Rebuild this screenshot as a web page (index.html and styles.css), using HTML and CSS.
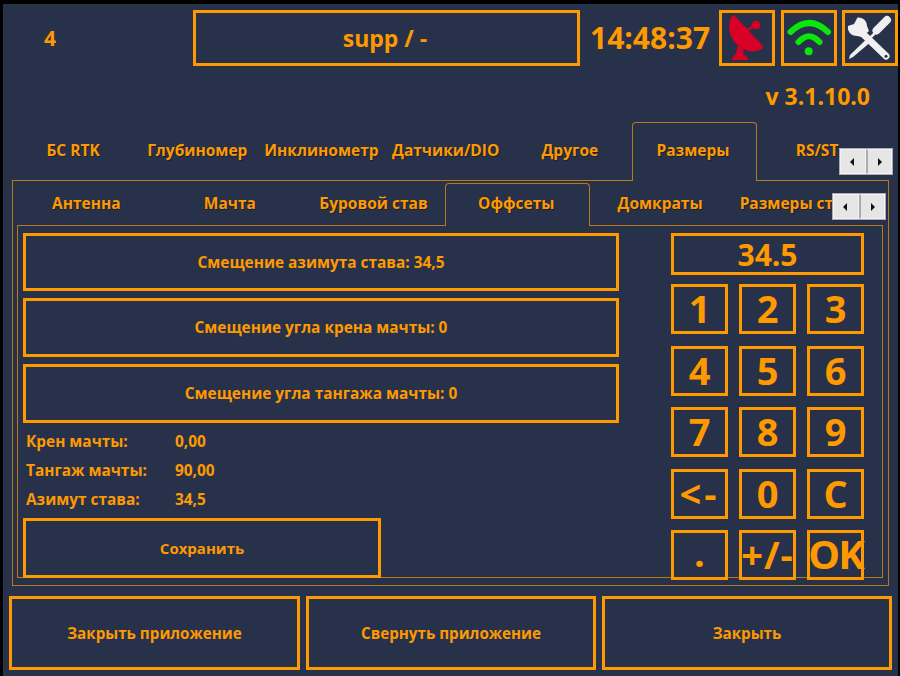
FILE: index.html
```html
<!DOCTYPE html>
<html lang="ru">
<head>
	<meta charset="UTF-8">
	<title>Размеры</title>
	<link rel="stylesheet" href="styles.css">
</head>
<body>
	<div class="app">
		<header class="top">
			<div class="top-num">4</div>
			<div class="box top-title">supp / -</div>
			<div class="top-time">14:48:37</div>
			<div class="box top-icon">
				<svg width="50" height="50" viewBox="0 0 50 50">
					<path fill="#d90026" d="M11 2 C7 6 6 14 8 20 C10 28 17 35 27 38 C32 39 37 38 41 35 C41 33 40 32 39 31 L12 2 Z"/>
					<path fill="none" stroke="#d90026" stroke-width="2.500" d="M22 19 L34 12"/>
					<circle fill="#d90026" cx="34" cy="12" r="4.300"/>
					<path fill="#d90026" d="M16 32 L14 41 C12 43 10 44 10 47 L26 47 C26 44 23 42 21 41 L22 36 Z"/>
				</svg>
			</div>
			<div class="box top-icon">
				<svg width="50" height="50" viewBox="0 0 50 50">
					<g fill="none" stroke="#0be60b" stroke-width="6" stroke-linecap="round">
						<path d="M6.500 19 Q25 1 44 19"/>
						<path d="M14.500 29 Q25 17.500 35.500 29"/>
					</g>
					<circle fill="#0be60b" cx="24.700" cy="38.300" r="4"/>
				</svg>
			</div>
			<div class="box top-icon">
				<svg width="50" height="50" viewBox="0 0 50 50">
					<path fill="#f0f0f0" d="M12.500 4.500 L9 11 L3 13 C2 18 6 23 12 23 L17 24 L24 18 L22 13 C22 8 18 4 12.500 4.500 Z"/>
					<path fill="none" stroke="#f0f0f0" stroke-width="7" stroke-linecap="round" d="M16 19 L41 43"/>
					<circle fill="#27324a" cx="41" cy="43.300" r="1.500"/>
					<path fill="none" stroke="#f0f0f0" stroke-width="8" stroke-linecap="round" d="M31.500 17.500 L42 7"/>
					<path fill="none" stroke="#f0f0f0" stroke-width="2.500" d="M30 20 L24 26"/>
					<path fill="#f0f0f0" d="M21 26.500 L24.500 30 L8 44 L4 46 L5 42 Z"/>
				</svg>
			</div>
		</header>
		<div class="version">v 3.1.10.0</div>

		<nav class="tabs">
			<div class="tab">БС RTK</div>
			<div class="tab">Глубиномер</div>
			<div class="tab">Инклинометр</div>
			<div class="tab">Датчики/DIO</div>
			<div class="tab">Другое</div>
			<div class="tab active">Размеры</div>
			<div class="tab">RS/ST</div>
		</nav>
		<div class="scroll scroll-outer"><span class="arr-l"></span><span class="arr-r"></span></div>

		<section class="pane">
			<nav class="tabs tabs-sub">
				<div class="tab">Антенна</div>
				<div class="tab">Мачта</div>
				<div class="tab">Буровой став</div>
				<div class="tab active">Оффсеты</div>
				<div class="tab">Домкраты</div>
				<div class="tab">Размеры станка</div>
			</nav>
			<div class="scroll scroll-inner"><span class="arr-l"></span><span class="arr-r"></span></div>

			<div class="subpane">
				<div class="left">
					<div class="box btn btn-first">Смещение азимута става: 34,5</div>
					<div class="box btn">Смещение угла крена мачты: 0</div>
					<div class="box btn">Смещение угла тангажа мачты: 0</div>
					<div class="info">
						<div class="info-row"><span class="info-label">Крен мачты:</span><span>0,00</span></div>
						<div class="info-row"><span class="info-label">Тангаж мачты:</span><span>90,00</span></div>
						<div class="info-row"><span class="info-label">Азимут става:</span><span>34,5</span></div>
					</div>
					<div class="box btn btn-save">Сохранить</div>
				</div>
				<div class="numpad">
					<div class="box display">34.5</div>
					<div class="keys">
						<div class="box key">1</div>
						<div class="box key">2</div>
						<div class="box key">3</div>
						<div class="box key">4</div>
						<div class="box key">5</div>
						<div class="box key">6</div>
						<div class="box key">7</div>
						<div class="box key">8</div>
						<div class="box key">9</div>
						<div class="box key key-back">&lt;-</div>
						<div class="box key">0</div>
						<div class="box key">C</div>
						<div class="box key key-dot">.</div>
						<div class="box key key-sign">+/-</div>
						<div class="box key key-ok">OK</div>
					</div>
				</div>
			</div>
		</section>

		<footer class="bottom">
			<div class="box btn-big">Закрыть приложение</div>
			<div class="box btn-big">Свернуть приложение</div>
			<div class="box btn-big">Закрыть</div>
		</footer>
	</div>
</body>
</html>
```

FILE: styles.css
```css
* {
	box-sizing: border-box;
	margin: 0;
	padding: 0;
}
html, body {
	height: 100%;
	overflow: hidden;
}
body {
	background: #000;
	padding: 4px 2px 0 3px;
	font-family: "Open Sans", "Noto Sans", sans-serif;
	font-weight: 700;
	color: #ff9900;
}
.app {
	position: relative;
	width: 895px;
	height: 672px;
	background: #27324a;
	padding-top: 6px;
}
.box {
	display: flex;
	align-items: center;
	justify-content: center;
	border: 3px solid #ff9900;
}

/* header */
.top {
	display: grid;
	grid-template-columns: 190px 387px 139px 56px 56px 56px;
	height: 56px;
}
.top-num {
	font-size: 21px;
	line-height: 56px;
	padding-left: 41px;
}
.top-title {
	font-size: 23px;
	padding-right: 3px;
}
.top-time {
	font-size: 30px;
	line-height: 56px;
	padding-left: 10px;
}
.top-icon {
	width: 56px;
}
.top-icon:nth-child(5) {
	margin-left: 6px;
	margin-right: -6px;
}
.top-icon:nth-child(6) {
	margin-left: 11px;
	margin-right: -11px;
}
.version {
	height: 56px;
	padding: 16px 28px 0 0;
	text-align: right;
	font-size: 23px;
	line-height: 28px;
}

/* tabs */
.tabs {
	position: relative;
	z-index: 2;
	display: flex;
	height: 59px;
	margin-left: 8px;
	overflow: hidden;
	font-size: 15.500px;
}
.tab {
	flex: 0 0 124.200px;
	text-align: center;
	line-height: 56px;
	white-space: nowrap;
	text-shadow: 1px 1px 0 #1a2030;
}
.tab.active {
	flex-basis: 125px;
	padding-right: 3px;
	border: 1px solid #b8781c;
	border-bottom: 0;
	border-radius: 4px 4px 0 0;
	background: #27324a;
	line-height: 54px;
}
.tab.active + .tab {
	padding-right: 4px;
}
.tabs-sub {
	height: 43px;
	margin: 2px 0 0 1.500px;
}
.tabs-sub .tab {
	flex-basis: 143.600px;
	line-height: 40px;
}
.tabs-sub .tab.active {
	flex-basis: 145px;
	line-height: 38px;
}
.scroll {
	position: absolute;
	z-index: 3;
	display: flex;
	width: 54px;
	height: 27px;
	background: #e8e8e8;
	border: 1px solid #a9adb3;
}
.scroll span {
	position: relative;
	flex: 1;
	border: 1px solid #f4f4f4;
	background: #e6e6e6;
}
.scroll span + span {
	border-left: 2px solid #a9adb3;
}
.scroll span::after {
	content: "";
	position: absolute;
	top: 8px;
	border: 4px solid transparent;
}
.scroll .arr-l::after {
	left: 5px;
	border-right-color: #111;
}
.scroll .arr-r::after {
	left: 10px;
	border-left-color: #111;
}
.scroll-outer {
	left: 836px;
	top: 144px;
}
.scroll-inner {
	left: 819px;
	top: 12px;
}

/* panes */
.pane {
	position: relative;
	width: 877px;
	height: 406px;
	margin-left: 9px;
	margin-top: -1px;
	border: 1px solid #b8781c;
}
.subpane {
	display: flex;
	width: 866px;
	height: 353px;
	margin-left: 4px;
	margin-top: -1px;
	padding: 7px 0 0 5px;
	border: 1px solid #b8781c;
}
.left {
	flex: 0 0 596px;
}
.btn {
	height: 59px;
	margin-bottom: 7px;
	font-size: 15.400px;
}
.btn-first {
	height: 58px;
}
.info {
	margin-top: -3px;
	font-size: 15.400px;
}
.info-row {
	display: flex;
	height: 29px;
	line-height: 29px;
	padding-left: 3px;
}
.info-label {
	width: 149px;
}
.btn-save {
	width: 358px;
	height: 60px;
	margin-top: 4px;
	font-size: 15px;
}

/* numpad */
.numpad {
	flex: 0 0 193px;
	margin-left: 52px;
}
.display {
	height: 42px;
	font-size: 30px;
}
.keys {
	display: grid;
	grid-template-columns: repeat(3, 57px);
	grid-auto-rows: 50px;
	column-gap: 11px;
	row-gap: 11.500px;
	margin-top: 9px;
}
.key {
	padding-bottom: 2px;
	font-size: 38px;
	line-height: 1;
	white-space: nowrap;
}
.key-back {
	letter-spacing: 3px;
}
.key-sign {
	letter-spacing: 1px;
}
.key-dot {
	padding-bottom: 6px;
}
.key-ok {
	font-size: 40px;
	letter-spacing: -2px;
}

/* bottom */
.bottom {
	display: grid;
	grid-template-columns: 291px 290px 290px;
	gap: 6px;
	margin: 10px 0 0 6px;
}
.btn-big {
	height: 74px;
	font-size: 15.200px;
}
```
